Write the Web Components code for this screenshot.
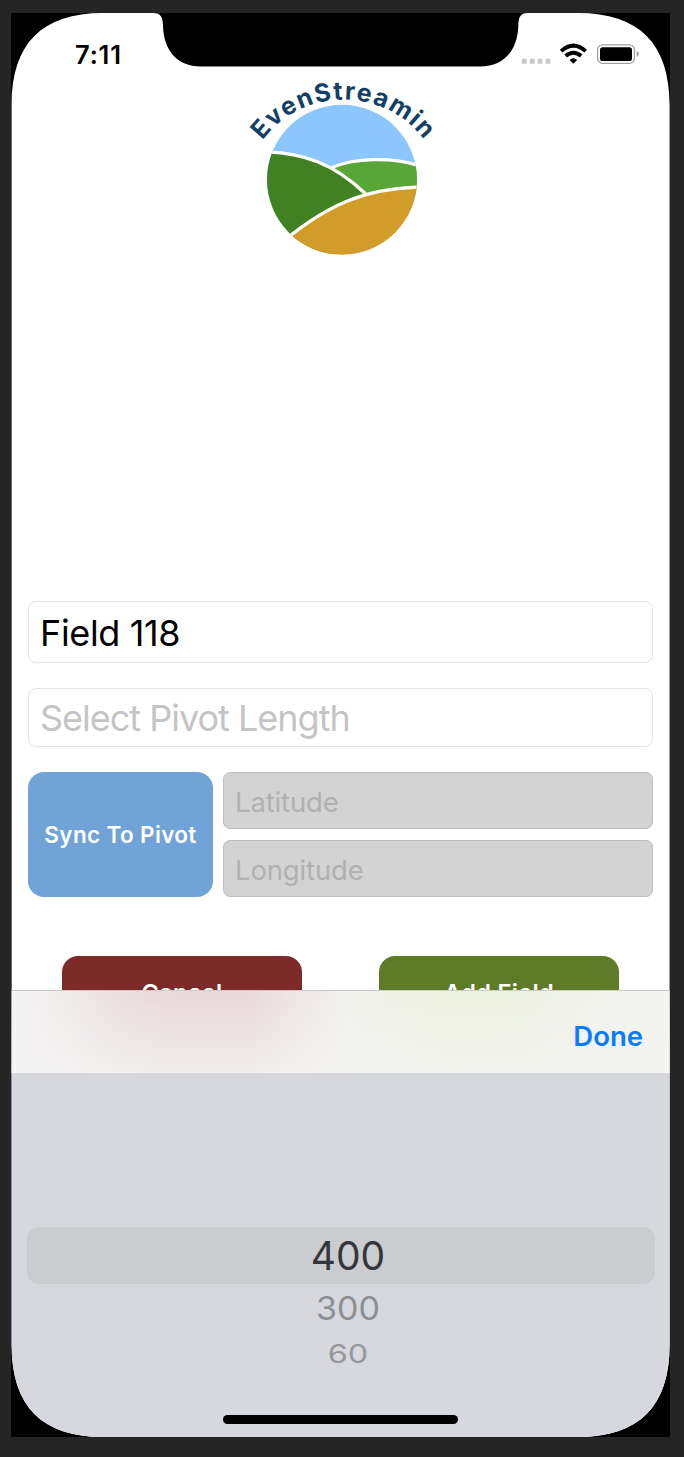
<!DOCTYPE html>
<html lang="en">
<head>
<meta charset="utf-8">
<title>EvenStreamin – Add Field</title>
<style>
html,body{margin:0;height:100%;background:#252525}
body{font-family:Inter,"Liberation Sans",sans-serif;overflow:hidden}
</style>
</head>
<body>
<phone-frame>
  <status-bar></status-bar>
  <add-field-form>
    <app-logo></app-logo>
    <text-field style="--h:62px;margin-top:331px"><span style="letter-spacing:-.35px;padding-top:1px">Field 118</span></text-field>
    <text-field style="--h:59px;margin-top:25px;--ink:#c4c4c6"><span style="letter-spacing:-1px">Select Pivot Length</span></text-field>
    <sync-row>
      <action-button slot="button" style="--bg:#71a3d6;--w:185px;--h:125px">Sync To Pivot</action-button>
      <text-field class="dim"><span>Latitude</span></text-field>
      <text-field class="dim"><span>Longitude</span></text-field>
    </sync-row>
    <button-row>
      <action-button style="--bg:#7c2b29;--fs:23.5px;--h:72px">Cancel</action-button>
      <action-button style="--bg:#607b28;--fs:23.5px;--h:72px">Add Field</action-button>
    </button-row>
  </add-field-form>
  <accessory-bar>Done</accessory-bar>
  <length-picker></length-picker>
</phone-frame>
<script>
function define(name, html){
  const t = document.createElement('template');
  t.innerHTML = html;
  customElements.define(name, class extends HTMLElement{
    constructor(){
      super();
      this.attachShadow({mode:'open'}).appendChild(t.content.cloneNode(true));
    }
  });
}

define('phone-frame', `<style>
:host{display:block;box-sizing:border-box;padding:13px 14px 20px 11px;height:1457px;width:684px}
.bezel{background:#000;height:1424px;width:659px}
.screen{height:1424px;background:#fff;display:flex;flex-direction:column;
clip-path:path("M.6 92C.6 30.7 31 0 92 0H142C149 0 151.6 3 152 12C152.3 37 166 53.5 190 53.5H469C493 53.5 507 37 507.3 12C507.6 3 510 0 517 0H567C628 0 658.6 30.7 658.6 92V1332C658.6 1393.3 628 1424 567 1424H92C31 1424 .6 1393.3 .6 1332Z")}
</style><div class="bezel"><div class="screen"><slot></slot></div></div>`);

define('status-bar', `<style>
:host{display:flex;box-sizing:border-box;height:57px;flex:none;padding:27px 34px 0 64px;justify-content:space-between;align-items:flex-start}
.time{font-size:25.5px;font-weight:600;line-height:30px;letter-spacing:.8px}
svg{display:block}
</style><span class="time">7:11</span>
<svg width="120" height="30" viewBox="516 40 120 30" overflow="visible">
<g fill="#c9c9c9"><rect x="521.7" y="58.7" width="5" height="5" rx="1"/><rect x="529.7" y="58.7" width="5" height="5" rx="1"/><rect x="537.5" y="58.7" width="5" height="5" rx="1"/><rect x="545.5" y="58.7" width="5" height="5" rx="1"/></g>
<g fill="none" stroke="#000" stroke-width="3.9"><path d="M561.1 51.1Q573.4 40.2 585.7 51.1"/><path d="M565.7 55.9Q573.4 49.4 581.1 55.9"/></g>
<path d="M569.6 60Q573.4 56.7 577.2 60L573.4 63.8Z"/>
<rect x="597.6" y="44.9" width="36.8" height="18.4" rx="5" fill="none" stroke="#a2a2a2" stroke-width="1.3"/>
<rect x="600" y="47.2" width="32" height="13.8" rx="2.6"/>
<path d="M636.7 51.2Q638.8 52 638.8 54T636.7 57Z" fill="#999"/>
</svg>`);

define('app-logo', `<style>
:host{display:block;width:220px;height:200px}
svg{display:block}
text{font:700 25px Inter,"Noto Sans",sans-serif;fill:#123f68}
</style><svg width="220" height="200" viewBox="0 0 220 200">
<defs><clipPath id="disc"><circle cx="112" cy="109.7" r="75"/></clipPath>
<path id="arc" d="M32.4 70.3A101 101 0 0 1 209 98"/></defs>
<g clip-path="url(#disc)"><g transform="scale(.33333)">
<rect x="100" y="90" width="480" height="280" fill="#8cc6ff"/>
<path d="M310 291C370 266 480 258 575 289V400H310Z" fill="#59a638" stroke="#fff" stroke-width="10"/>
<path d="M90 245C220 247 310 280 405 370L300 570H60Z" fill="#408122" stroke="#fff" stroke-width="10"/>
<path d="M120 548C285 400 410 352 585 351V620H120Z" fill="#d19c28" stroke="#fff" stroke-width="10"/>
</g></g>
<text textLength="187"><textPath href="#arc">EvenStreamin</textPath></text>
</svg>`);

define('add-field-form', `<style>
:host{display:flex;flex-direction:column;height:920px;flex:none;overflow:hidden;padding:0 17px;box-sizing:border-box}
::slotted(app-logo){margin-left:202px;flex:none}
</style><slot></slot>`);

define('text-field', `<style>
:host{display:flex;align-items:center;box-sizing:border-box;flex:none;height:var(--h);border:1px solid #e4e4e5;border-radius:8px;padding:0 11px;color:var(--ink,#000);font-size:36px;line-height:44px;white-space:nowrap}
:host(.dim){--h:57px;font-size:27.5px;padding-top:2px;color:#b1b1b1;background:#d3d3d3;border-color:#bdbdbd;border-radius:7px;letter-spacing:-.15px}
</style><slot></slot>`);

define('action-button', `<style>
:host{display:flex;align-items:center;justify-content:center;box-sizing:border-box;flex:none;width:var(--w,240px);height:var(--h,70px);background:var(--bg);border-radius:16px;color:#fff;font-size:var(--fs,22.5px);font-weight:600;letter-spacing:.35px;white-space:nowrap}
</style><slot></slot>`);

define('sync-row', `<style>
:host{display:flex;gap:10px;margin-top:25px;flex:none}
.coords{flex:1;display:flex;flex-direction:column;justify-content:space-between}
</style><slot name="button"></slot><div class="coords"><slot></slot></div>`);

define('button-row', `<style>
:host{display:flex;justify-content:space-between;margin-top:59px;padding:0 34px;flex:none}
</style><slot></slot>`);

define('accessory-bar', `<style>
:host{display:flex;flex:none;height:83px;box-sizing:border-box;border-top:1px solid #cbcbcb;justify-content:flex-end;align-items:center;padding:7px 27px 0 0;color:#087cff;font-size:27.5px;font-weight:600;
background:linear-gradient(#f4f4f300 10%,#f4f4f3bb),linear-gradient(90deg,#f4f3f3 0,#f0ebeb 9%,#ebdfe0 17%,#e9dadb 25%,#e9dadb 36%,#eee6e5 43%,#f1f0ed 50%,#eff1e8 57%,#edf1e1 66%,#edf1e2 78%,#f2f3ef 92%,#f4f4f3)}
</style><slot></slot>`);

define('length-picker', `<style>
:host{display:flex;flex-direction:column;align-items:center;flex:none;height:364px;background:#d7d8dd;box-sizing:border-box;padding-top:154px}
div{box-sizing:border-box;width:628px;text-align:center;padding-left:15px;flex:none}
.sel{height:57px;line-height:57px;border-radius:12px;background:#cbccd0;font-size:39px;color:#35363a}
.r1{height:50px;line-height:50px;font-size:34px;color:#8d8e92}
.r2{height:40px;line-height:40px;font-size:32.5px;color:#96979b}
span{display:inline-block}
.home{width:235px;height:8.5px;border-radius:5px;background:#000;margin-top:41px;padding:0}
</style><div class="sel"><span>400</span></div>
<div class="r1"><span style="transform:scaleY(.94)">300</span></div>
<div class="r2"><span style="transform:scaleY(.8)">60</span></div>
<div class="home"></div>`);
</script>
</body>
</html>
